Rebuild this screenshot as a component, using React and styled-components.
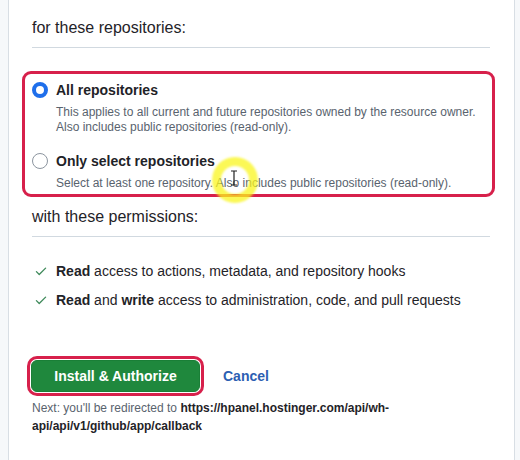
import styled, { createGlobalStyle } from "styled-components";

const GlobalStyle = createGlobalStyle`
  html, body {
    margin: 0;
    padding: 0;
    background: #f6f8fa;
    font-family: "Liberation Sans", Arial, sans-serif;
    color: #1f2328;
  }
`;

const Page = styled.div`
  width: 520px;
  height: 460px;
  overflow: hidden;
  position: relative;
`;

const Card = styled.div`
  margin: -1px 0 0 8px;
  width: 458px;
  min-height: 480px;
  background: #ffffff;
  border: 1px solid #d8dee4;
  padding: 16px 24px 0 23px;
  box-sizing: content-box;
`;

const SectionTitle = styled.div`
  font-size: 16px;
  line-height: 24px;
  padding-bottom: 7px;
  border-bottom: 1px solid #d1d9e0;
  margin-top: ${(p) => p.top || 0}px;
`;

const Highlight = styled.div`
  margin: 23px -5px 0 -10px;
  border: 3px solid #d7204b;
  border-radius: 9px;
  padding: 6px 10px 3px 7px;
`;

const Option = styled.div`
  display: grid;
  grid-template-columns: 16px 1fr;
  column-gap: 8px;
  margin-top: ${(p) => p.top || 0}px;
`;

const Radio = styled.span`
  width: 16px;
  height: 16px;
  box-sizing: border-box;
  border-radius: 50%;
  margin-top: 2px;
  border: ${(p) => (p.checked ? "4.5px solid #1f6feb" : "1px solid #8c959f")};
  background: #fff;
`;

const OptionLabel = styled.div`
  font-size: 14px;
  line-height: 20px;
  font-weight: 700;
`;

const OptionDesc = styled.div`
  grid-column: 2;
  margin-top: 5px;
  font-size: 12px;
  line-height: 15px;
  color: #59636e;
`;

const PermList = styled.ul`
  list-style: none;
  margin: 24px 0 0;
  padding: 0 0 0 2px;
  display: flex;
  flex-direction: column;
  gap: 9px;
`;

const Perm = styled.li`
  display: flex;
  align-items: center;
  gap: 8px;
  font-size: 14px;
  line-height: 20px;
  b {
    font-weight: 700;
  }
`;

const Actions = styled.div`
  display: flex;
  align-items: center;
  gap: 23px;
  margin-top: 50px;
`;

const PrimaryButton = styled.button`
  height: 32px;
  width: 169px;
  border: 1px solid #1a7f37;
  border-radius: 6px;
  background: #1f883d;
  color: #ffffff;
  font-family: inherit;
  font-size: 14px;
  font-weight: 700;
  margin-left: -1px;
  box-shadow: 0 0 0 1px #ffffff, 0 0 0 4px #d7204b;
`;

const LinkButton = styled.a`
  color: #2c5fb3;
  font-size: 14px;
  font-weight: 700;
`;

const Note = styled.p`
  margin: 7px 0 0;
  width: 430px;
  font-size: 12px;
  line-height: 18px;
  color: #59636e;
  b {
    color: #1f2328;
    font-weight: 700;
  }
`;

const CursorHalo = styled.div`
  position: absolute;
  left: 212px;
  top: 157px;
  width: 46px;
  height: 46px;
  border-radius: 50%;
  border: 9px solid rgba(250, 245, 30, 0.75);
  box-sizing: border-box;
  filter: blur(1px);
  pointer-events: none;
`;

const Cursor = styled.svg`
  position: absolute;
  left: 230px;
  top: 170px;
`;

const Check = () => (
  <svg width="14" height="14" viewBox="0 0 16 16" fill="#3f8a5b">
    <path d="M13.78 4.22a.75.75 0 0 1 0 1.06l-7.25 7.25a.75.75 0 0 1-1.06 0L2.22 9.28a.751.751 0 0 1 .018-1.042.751.751 0 0 1 1.042-.018L6 10.94l6.72-6.72a.75.75 0 0 1 1.06 0Z" />
  </svg>
);

export default function App() {
  return (
    <Page>
      <GlobalStyle />
      <Card>
        <SectionTitle>for these repositories:</SectionTitle>
        <Highlight>
          <Option>
            <Radio checked />
            <OptionLabel>All repositories</OptionLabel>
            <OptionDesc>
              This applies to all current and future repositories owned by the resource owner.
              <br />
              Also includes public repositories (read-only).
            </OptionDesc>
          </Option>
          <Option top={16}>
            <Radio />
            <OptionLabel>Only select repositories</OptionLabel>
            <OptionDesc>
              Select at least one repository. Also includes public repositories (read-only).
            </OptionDesc>
          </Option>
        </Highlight>
        <SectionTitle top={8}>with these permissions:</SectionTitle>
        <PermList>
          <Perm>
            <Check />
            <span>
              <b>Read</b> access to actions, metadata, and repository hooks
            </span>
          </Perm>
          <Perm>
            <Check />
            <span>
              <b>Read</b> and <b>write</b> access to administration, code, and pull requests
            </span>
          </Perm>
        </PermList>
        <Actions>
          <PrimaryButton>Install &amp; Authorize</PrimaryButton>
          <LinkButton>Cancel</LinkButton>
        </Actions>
        <Note>
          Next: you'll be redirected to{" "}
          <b>https://hpanel.hostinger.com/api/wh-api/api/v1/github/app/callback</b>
        </Note>
      </Card>
      <CursorHalo />
      <Cursor width="8" height="16" viewBox="0 0 8 16">
        <path d="M1 1h6M4 1v14M1 15h6" stroke="#222" strokeWidth="1.2" fill="none" />
      </Cursor>
    </Page>
  );
}
